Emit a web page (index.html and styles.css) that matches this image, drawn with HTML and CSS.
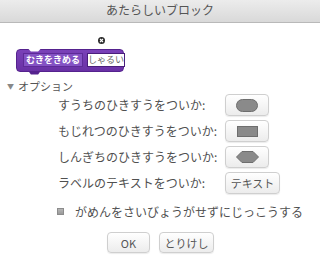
FILE: index.html
```html
<!DOCTYPE html>
<html lang="ja">
<head>
<meta charset="utf-8">
<link rel="stylesheet" href="styles.css">
</head>
<body>
<div class="dialog">
  <div class="titlebar">あたらしいブロック</div>
  <div class="preview">
    <div class="block">
      <span class="blabel">むきをきめる</span>
      <span class="binput">しゃるい</span>
      <span class="close"><svg width="7" height="7" viewBox="0 0 7 7"><circle cx="3.5" cy="3.5" r="3.5" fill="#2b2b2b"/><path d="M2 2 L5 5 M5 2 L2 5" stroke="#fff" stroke-width="1.1"/></svg></span>
    </div>
  </div>
  <div class="options"><span class="tri">▼</span>オプション</div>
  <div class="rows">
    <span class="lbl">すうちのひきすうをついか:</span>
    <button class="btn shape"><svg width="22" height="13" viewBox="0 0 22 13"><rect x="0.5" y="0.5" width="21" height="12" rx="6" fill="#8a8a8a" stroke="#6e6e6e"/></svg></button>
    <span class="lbl">もじれつのひきすうをついか:</span>
    <button class="btn shape"><svg width="21" height="11" viewBox="0 0 21 11"><rect x="0.5" y="0.5" width="20" height="10" fill="#8a8a8a" stroke="#6e6e6e"/></svg></button>
    <span class="lbl">しんぎちのひきすうをついか:</span>
    <button class="btn shape"><svg width="23" height="12" viewBox="0 0 23 12"><path d="M0.5 6 L6 0.5 L17 0.5 L22.5 6 L17 11.5 L6 11.5 Z" fill="#8a8a8a" stroke="#6e6e6e"/></svg></button>
    <span class="lbl">ラベルのテキストをついか:</span>
    <button class="btn text">テキスト</button>
  </div>
  <div class="check"><span class="box"></span>がめんをさいびょうがせずにじっこうする</div>
  <div class="actions">
    <button class="btn act ok">OK</button>
    <button class="btn act cancel">とりけし</button>
  </div>
</div>
</body>
</html>
```
FILE: styles.css
```css
html, body {
  margin: 0;
  padding: 0;
  background: #fff;
}
body {
  font-family: "Noto Sans CJK JP", "Noto Sans", sans-serif;
  color: #505050;
  width: 320px;
  height: 263px;
  overflow: hidden;
}
.dialog {
  width: 320px;
  height: 263px;
  background: #fff;
}
.titlebar {
  height: 22px;
  line-height: 20px;
  text-align: center;
  font-size: 12px;
  color: #555;
  background: linear-gradient(#ececec, #d9d9d9);
  border-bottom: 1px solid #b9b9b9;
}
.preview {
  height: 57px;
  box-sizing: border-box;
  padding: 21px 0 0 16px;
}
.block {
  position: relative;
  display: inline-flex;
  align-items: center;
  gap: 4px;
  height: 23px;
  width: 108px;
  box-sizing: border-box;
  padding: 0 2px 0 6px;
  background: linear-gradient(#7a41b8, #6931a5);
  border: 1px solid #55228e;
  border-radius: 4px;
}
.block::before {
  content: "";
  position: absolute;
  left: 11px;
  top: -1px;
  width: 13px;
  height: 3px;
  background: #fff;
  clip-path: polygon(0 0, 100% 0, 78% 100%, 22% 100%);
}
.block::after {
  content: "";
  position: absolute;
  left: 11px;
  bottom: -4px;
  width: 13px;
  height: 4px;
  background: #55228e;
  clip-path: polygon(0 0, 100% 0, 78% 100%, 22% 100%);
}
.blabel {
  display: inline-block;
  height: 12px;
  line-height: 12px;
  padding: 0 2px;
  font-size: 9px;
  font-weight: bold;
  color: #fff;
  background: #8452c4;
  border: 1px solid #5e2b98;
  white-space: nowrap;
}
.binput {
  display: inline-block;
  height: 12px;
  line-height: 12px;
  width: 40px;
  box-sizing: content-box;
  text-align: center;
  font-size: 9px;
  color: #666;
  background: #fff;
  border: 1px solid #4a1e7c;
  white-space: nowrap;
}
.close {
  position: absolute;
  left: 81px;
  top: -13px;
  width: 7px;
  height: 7px;
  line-height: 0;
}
.options {
  height: 12px;
  line-height: 12px;
  padding-left: 7px;
  font-size: 11px;
  color: #555;
  display: flex;
  align-items: center;
}
.tri {
  font-size: 7px;
  color: #888;
  margin-right: 4px;
}
.rows {
  display: grid;
  grid-template-columns: 167px auto;
  grid-auto-rows: 26px;
  align-items: center;
  padding-left: 58px;
}
.lbl {
  font-size: 12px;
  line-height: 16px;
  white-space: nowrap;
}
.btn {
  font-family: "Noto Sans CJK JP", "Noto Sans", sans-serif;
  background: linear-gradient(#ffffff, #ececec);
  border: 1px solid #cfcfcf;
  border-radius: 4px;
  box-shadow: 0 1px 1px rgba(0,0,0,0.08);
  padding: 0;
  margin: 0;
  color: #555;
  display: inline-flex;
  align-items: center;
  justify-content: center;
  cursor: default;
}
.shape {
  width: 44px;
  height: 22px;
}
.shape svg {
  display: block;
}
.text {
  width: 55px;
  height: 22px;
  font-size: 11px;
}
.check {
  height: 26px;
  margin-top: 2px;
  display: flex;
  align-items: center;
  padding-left: 57px;
  font-size: 12px;
  white-space: nowrap;
}
.box {
  width: 5px;
  height: 5px;
  border: 1px solid #8c8c8c;
  background: linear-gradient(#b5b5b5, #9a9a9a);
  margin-right: 11px;
}
.actions {
  margin-top: 8px;
  display: flex;
  justify-content: center;
  gap: 9px;
  padding-left: 1px;
}
.act {
  height: 21px;
  font-size: 11px;
}
.ok {
  width: 43px;
}
.cancel {
  width: 55px;
}
```
